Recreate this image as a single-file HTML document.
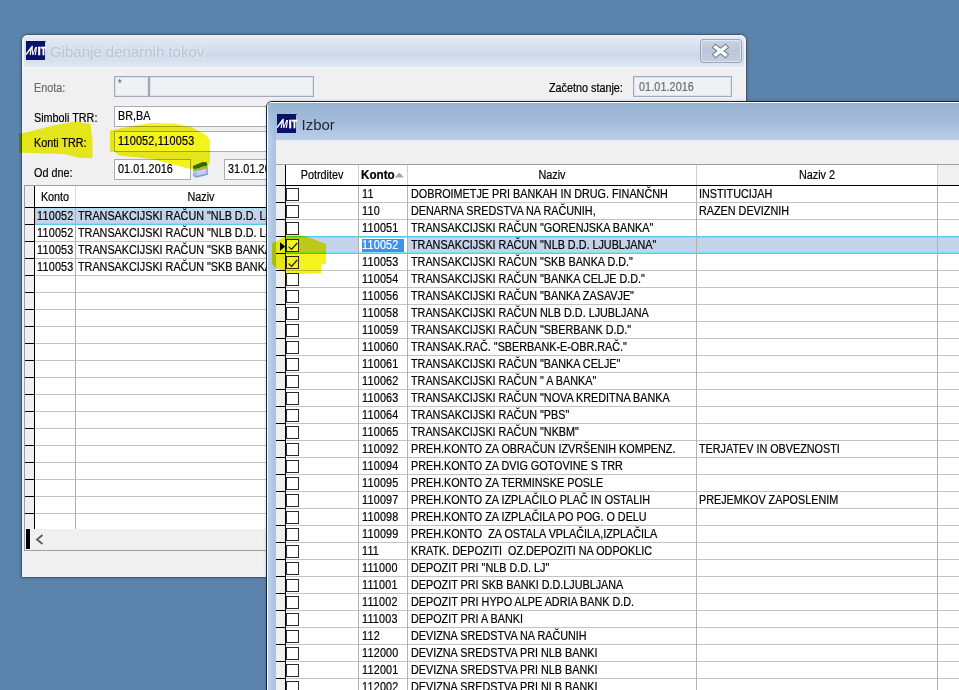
<!DOCTYPE html>
<html lang="sl"><head><meta charset="utf-8"><title>Gibanje denarnih tokov</title>
<style>
html,body{margin:0;padding:0}
body{width:959px;height:690px;overflow:hidden;background:#5b83ab;position:relative;font-family:"Liberation Sans",sans-serif}
#root{position:absolute;left:0;top:0;width:959px;height:690px;overflow:hidden}
.a{position:absolute}
.t{position:absolute;font:12px/14px "Liberation Sans",sans-serif;color:#000;-webkit-text-stroke:.2px currentColor;white-space:pre;transform:scaleX(.9);transform-origin:0 0}
.tc{position:absolute;font:12px/14px "Liberation Sans",sans-serif;color:#000;-webkit-text-stroke:.2px currentColor;white-space:pre;transform:scaleX(.9);transform-origin:50% 0;text-align:center}

.vl{position:absolute;background:#a0a0a0;width:1px}
.cb{position:absolute;width:11px;height:11px;border:1px solid #2a2a2a;background:#fff}
.rh{position:absolute;background:#000;height:1px}
.fld{position:absolute;background:#fff;border:1px solid #abadb3;box-sizing:border-box}
.dis{position:absolute;background:#f0f1f4;border:1px solid #a3a9bb;box-sizing:border-box;box-shadow:inset 0 0 0 1px #dae2f0}
</style></head>
<body><div id="root">
<div class="a" style="left:21px;top:34px;width:726px;height:544px;box-sizing:border-box;border:1px solid #45566b;border-radius:7px 7px 1px 1px;background:#f0f0f0;box-shadow:0 0 3px rgba(20,35,60,.28);overflow:hidden">
<div class="a" style="left:0;top:0;right:0;height:32px;background:linear-gradient(#e9eef6 0,#dae2f0 30%,#ced8ea 62%,#d8e1f0 85%,#e2e9f4 100%);"></div>
<div class="a" style="left:0;top:0;right:0;bottom:0;border:2px solid #eef3fb;border-top-width:1px;border-radius:6px 6px 0 0"></div>
<div class="a" style="left:0;top:32px;right:0;height:1px;background:#f6f8fc"></div>
</div>
<svg class="a" style="left:26px;top:41px" width="21" height="19" viewBox="0 0 21 19"><rect x="0" y="0" width="19" height="19" fill="#0b1169"/><rect x="18.6" y="0" width="1" height="1" fill="#0b1169"/><line x1="0" y1="13.6" x2="6.6" y2="5" stroke="#fff" stroke-width="1.5"/><g font-family="Liberation Sans,sans-serif" font-weight="bold" font-style="italic" font-size="11.7" fill="#fff"><text x="3.4" y="14" textLength="7.4" lengthAdjust="spacingAndGlyphs">M</text></g><g font-family="Liberation Sans,sans-serif" font-weight="bold" font-size="11.7" fill="#fff" stroke="#fff" stroke-width=".45"><text x="11.6" y="14">I</text><text x="14.7" y="14" textLength="5.4" lengthAdjust="spacingAndGlyphs">T</text></g></svg>
<span class="a" style="left:50px;top:42px;font:15px/20px 'Liberation Sans',sans-serif;color:#bbc4d2;text-shadow:0 0 5px rgba(255,255,255,.8);white-space:pre">Gibanje denarnih tokov</span>
<div class="a" style="left:700px;top:39px;width:42px;height:24px;box-sizing:border-box;border:1px solid #98a4ba;border-radius:3px;background:linear-gradient(#ccd4e2,#bcc6d8 50%,#c6cfdf);box-shadow:inset 0 0 0 1px rgba(255,255,255,.45)"></div>
<svg class="a" style="left:710px;top:42px" width="22" height="19" viewBox="0 0 22 19"><path d="M3.48 3.65 L17.52 14.35 M17.52 3.65 L3.48 14.35" stroke="#6d7584" stroke-width="5.4" fill="none"/><path d="M4.2 4.2 L16.8 13.8 M16.8 4.2 L4.2 13.8" stroke="#f9fafc" stroke-width="3.5" fill="none"/></svg>
<span class="t" style="left:34px;top:81px;color:#6d6d6d">Enota:</span>
<span class="t" style="left:34px;top:111px;">Simboli TRR:</span>
<span class="t" style="left:34px;top:136px;">Konti TRR:</span>
<span class="t" style="left:34px;top:166px;">Od dne:</span>
<span class="t" style="left:549px;top:81px;">Začetno stanje:</span>
<div class="dis" style="left:114px;top:76px;width:35px;height:21px"></div>
<div class="dis" style="left:149px;top:76px;width:165px;height:21px"></div>
<span class="t" style="left:118px;top:77px;color:#6d6d6d;font-size:10px">*</span>
<div class="dis" style="left:633px;top:76px;width:99px;height:21px"></div>
<span class="t" style="left:639px;top:80px;letter-spacing:.1px;color:#6d6d6d">01.01.2016</span>
<div class="fld" style="left:114px;top:106px;width:300px;height:21px"></div>
<div class="fld" style="left:114px;top:131px;width:300px;height:21px"></div>
<div class="fld" style="left:114px;top:159px;width:77px;height:21px"></div>
<div class="fld" style="left:224px;top:159px;width:77px;height:21px"></div>
<span class="t" style="left:118px;top:109px;">BR,BA</span>
<span class="t" style="left:118px;top:134px;letter-spacing:.25px;">110052,110053</span>
<span class="t" style="left:118px;top:162px;letter-spacing:.1px;">01.01.2016</span>
<span class="t" style="left:228px;top:162px;letter-spacing:.1px;">31.01.2016</span>
<svg class="a" style="left:192px;top:161px" width="17" height="17" viewBox="0 0 17 17"><defs><linearGradient id="cg" x1="0" y1="0" x2="0" y2="1"><stop offset="0" stop-color="#c4ccf9"/><stop offset="1" stop-color="#93b4e6"/></linearGradient></defs><path d="M1 9.3 L3.5 9.8 L15.6 6.8 L15.6 13.4 L4.2 16.2 L1 14.6 Z" fill="url(#cg)"/><path d="M1.2 14.6 L4.2 16.2 L15.6 13.4" fill="none" stroke="#6d8cc6" stroke-width=".9"/><path d="M14.6 7 L15.6 6.8 L15.6 13.4 L14.6 13.6 Z" fill="#7d97cf"/><path d="M1 7.4 L3.5 7.9 L15.4 4.4 L15.6 6.9 L3.5 10 L1 9.5 Z" fill="#86c225"/><path d="M1 5 L10.5 1 L14.8 1.2 L15.4 4.5 L3.5 8 L1 7.5 Z" fill="#2f6d12"/><path d="M8.6 6.2 L12.6 5.1 L12.6 8 L8.6 9.1 Z" fill="#e9a818"/><path d="M5 11.6 L13.5 9.5 M5 13.6 L13.5 11.5" stroke="#dfe9fb" stroke-width=".8"/></svg>
<div class="a" style="left:24px;top:185px;width:720px;height:1px;background:#a0a0a0;"></div>
<div class="a" style="left:24px;top:185px;width:1px;height:365px;background:#a0a0a0;"></div>
<div class="a" style="left:25px;top:186px;width:720px;height:343px;background:#fff;"></div>
<div class="a" style="left:25px;top:186px;width:9px;height:343px;background:#f0f0f0;"></div>
<div class="a" style="left:34px;top:186px;width:1px;height:343px;background:#000;"></div>
<div class="a" style="left:35px;top:208px;width:720px;height:16px;background:#c4d3ea;"></div>
<div class="a" style="left:35px;top:208px;width:720px;height:1px;background:#a6e2f2;"></div>
<div class="a" style="left:35px;top:208px;width:1px;height:16px;background:#7fdcf0;"></div>
<div class="a" style="left:35px;top:223px;width:720px;height:1px;background:#84dff3;"></div>
<div class="a" style="left:35px;top:224px;width:720px;height:1px;background:#52ceec;"></div>
<div class="a" style="left:35px;top:207px;width:720px;height:1px;background:#000;"></div>
<div class="a" style="left:25px;top:207px;width:9px;height:1px;background:#000;"></div>
<div class="a" style="left:25px;top:224px;width:9px;height:1px;background:#000;"></div>
<div class="a" style="left:35px;top:241px;width:720px;height:1px;background:#c3c3c3;"></div>
<div class="a" style="left:25px;top:241px;width:9px;height:1px;background:#000;"></div>
<div class="a" style="left:35px;top:258px;width:720px;height:1px;background:#c3c3c3;"></div>
<div class="a" style="left:25px;top:258px;width:9px;height:1px;background:#000;"></div>
<div class="a" style="left:35px;top:275px;width:720px;height:1px;background:#c3c3c3;"></div>
<div class="a" style="left:25px;top:275px;width:9px;height:1px;background:#000;"></div>
<div class="a" style="left:35px;top:292px;width:720px;height:1px;background:#c3c3c3;"></div>
<div class="a" style="left:25px;top:292px;width:9px;height:1px;background:#000;"></div>
<div class="a" style="left:35px;top:309px;width:720px;height:1px;background:#c3c3c3;"></div>
<div class="a" style="left:25px;top:309px;width:9px;height:1px;background:#000;"></div>
<div class="a" style="left:35px;top:326px;width:720px;height:1px;background:#c3c3c3;"></div>
<div class="a" style="left:25px;top:326px;width:9px;height:1px;background:#000;"></div>
<div class="a" style="left:35px;top:343px;width:720px;height:1px;background:#c3c3c3;"></div>
<div class="a" style="left:25px;top:343px;width:9px;height:1px;background:#000;"></div>
<div class="a" style="left:35px;top:360px;width:720px;height:1px;background:#c3c3c3;"></div>
<div class="a" style="left:25px;top:360px;width:9px;height:1px;background:#000;"></div>
<div class="a" style="left:35px;top:377px;width:720px;height:1px;background:#c3c3c3;"></div>
<div class="a" style="left:25px;top:377px;width:9px;height:1px;background:#000;"></div>
<div class="a" style="left:35px;top:394px;width:720px;height:1px;background:#c3c3c3;"></div>
<div class="a" style="left:25px;top:394px;width:9px;height:1px;background:#000;"></div>
<div class="a" style="left:35px;top:411px;width:720px;height:1px;background:#c3c3c3;"></div>
<div class="a" style="left:25px;top:411px;width:9px;height:1px;background:#000;"></div>
<div class="a" style="left:35px;top:428px;width:720px;height:1px;background:#c3c3c3;"></div>
<div class="a" style="left:25px;top:428px;width:9px;height:1px;background:#000;"></div>
<div class="a" style="left:35px;top:445px;width:720px;height:1px;background:#c3c3c3;"></div>
<div class="a" style="left:25px;top:445px;width:9px;height:1px;background:#000;"></div>
<div class="a" style="left:35px;top:462px;width:720px;height:1px;background:#c3c3c3;"></div>
<div class="a" style="left:25px;top:462px;width:9px;height:1px;background:#000;"></div>
<div class="a" style="left:35px;top:479px;width:720px;height:1px;background:#c3c3c3;"></div>
<div class="a" style="left:25px;top:479px;width:9px;height:1px;background:#000;"></div>
<div class="a" style="left:35px;top:496px;width:720px;height:1px;background:#c3c3c3;"></div>
<div class="a" style="left:25px;top:496px;width:9px;height:1px;background:#000;"></div>
<div class="a" style="left:35px;top:513px;width:720px;height:1px;background:#c3c3c3;"></div>
<div class="a" style="left:25px;top:513px;width:9px;height:1px;background:#000;"></div>
<div class="a" style="left:35px;top:530px;width:720px;height:1px;background:#c3c3c3;"></div>
<div class="a" style="left:25px;top:530px;width:9px;height:1px;background:#000;"></div>
<div class="a" style="left:75px;top:186px;width:1px;height:21px;background:#dcdcdc;"></div>
<div class="a" style="left:75px;top:208px;width:1px;height:321px;background:#b0b0b0;"></div>
<div class="a" style="left:325px;top:186px;width:1px;height:343px;background:#b0b0b0;"></div>
<span class="tc" style="left:25px;top:190px;width:60px;">Konto</span>
<span class="tc" style="left:170.5px;top:190px;width:60px;">Naziv</span>
<span class="t" style="left:37px;top:209px;letter-spacing:.25px;">110052</span>
<span class="t" style="left:78px;top:209px;">TRANSAKCIJSKI RAČUN "NLB D.D. LJUBLJANA"</span>
<span class="t" style="left:37px;top:226px;letter-spacing:.25px;">110052</span>
<span class="t" style="left:78px;top:226px;">TRANSAKCIJSKI RAČUN "NLB D.D. LJUBLJANA"</span>
<span class="t" style="left:37px;top:243px;letter-spacing:.25px;">110053</span>
<span class="t" style="left:78px;top:243px;">TRANSAKCIJSKI RAČUN "SKB BANKA D.D."</span>
<span class="t" style="left:37px;top:260px;letter-spacing:.25px;">110053</span>
<span class="t" style="left:78px;top:260px;">TRANSAKCIJSKI RAČUN "SKB BANKA D.D."</span>
<div class="a" style="left:25px;top:529px;width:720px;height:21px;background:#f0f0f0;"></div>
<div class="a" style="left:24px;top:550px;width:721px;height:1px;background:#a0a0a0;"></div>
<div class="a" style="left:26px;top:529px;width:4px;height:20px;background:#000;"></div>
<svg class="a" style="left:35px;top:534px" width="9" height="11" viewBox="0 0 9 11"><path d="M7.5 1 L2 5.5 L7.5 10" fill="none" stroke="#5a5a5a" stroke-width="1.8"/></svg>
<div class="a" style="left:266px;top:101px;width:720px;height:620px;box-sizing:border-box;border:1px solid #1a2533;border-radius:6px 6px 0 0;background:#f0f0f0;box-shadow:0 0 3px rgba(10,25,50,.22);overflow:hidden">
<div class="a" style="left:0;top:0;right:0;height:38px;background:linear-gradient(#fff 0,#fff 1px,#97b3d3 1px,#a5bddb 55%,#bccfea 100%)"></div>
<div class="a" style="left:0;top:38px;right:0;height:1px;background:#e6edf9"></div>
<div class="a" style="left:0;top:1px;width:9px;bottom:0;background:linear-gradient(90deg,#fff 0,#fff 1px,#bad2ec 1px,#a6c0df 100%)"></div>
<div class="a" style="left:1px;top:1px;width:8px;height:37px;background:linear-gradient(rgba(151,179,211,.9) 0,rgba(165,189,219,0) 100%)"></div>
</div>
<svg class="a" style="left:277px;top:114px" width="21" height="19" viewBox="0 0 21 19"><rect x="0" y="0" width="19" height="19" fill="#0b1169"/><rect x="18.6" y="0" width="1" height="1" fill="#0b1169"/><line x1="0" y1="13.6" x2="6.6" y2="5" stroke="#fff" stroke-width="1.5"/><g font-family="Liberation Sans,sans-serif" font-weight="bold" font-style="italic" font-size="11.7" fill="#fff"><text x="3.4" y="14" textLength="7.4" lengthAdjust="spacingAndGlyphs">M</text></g><g font-family="Liberation Sans,sans-serif" font-weight="bold" font-size="11.7" fill="#fff" stroke="#fff" stroke-width=".45"><text x="11.6" y="14">I</text><text x="14.7" y="14" textLength="5.4" lengthAdjust="spacingAndGlyphs">T</text></g></svg>
<span class="a" style="left:301.5px;top:115px;font:15px/20px 'Liberation Sans',sans-serif;color:#1c2737;white-space:pre">Izbor</span>
<div class="a" style="left:276px;top:164px;width:700px;height:1px;background:#a0a0a0;"></div>
<div class="a" style="left:276px;top:165px;width:700px;height:540px;background:#fff;"></div>
<div class="a" style="left:276px;top:165px;width:9px;height:540px;background:#f0f0f0;"></div>
<div class="a" style="left:938px;top:165px;width:40px;height:20px;background:#f0f0f0;"></div>
<div class="a" style="left:285px;top:165px;width:1px;height:540px;background:#000;"></div>
<div class="a" style="left:286px;top:237px;width:700px;height:16px;background:#c4d3ea;"></div>
<div class="a" style="left:286px;top:236px;width:700px;height:1px;background:#52ceec;"></div>
<div class="a" style="left:286px;top:237px;width:700px;height:1px;background:#84dff3;"></div>
<div class="a" style="left:286px;top:252px;width:700px;height:1px;background:#84dff3;"></div>
<div class="a" style="left:286px;top:253px;width:700px;height:1px;background:#52ceec;"></div>
<div class="a" style="left:276px;top:185px;width:700px;height:1px;background:#000;"></div>
<div class="a" style="left:286px;top:202px;width:700px;height:1px;background:#c3c3c3;"></div>
<div class="a" style="left:276px;top:202px;width:9px;height:1px;background:#000;"></div>
<div class="a" style="left:286px;top:219px;width:700px;height:1px;background:#c3c3c3;"></div>
<div class="a" style="left:276px;top:219px;width:9px;height:1px;background:#000;"></div>
<div class="a" style="left:276px;top:236px;width:9px;height:1px;background:#000;"></div>
<div class="a" style="left:276px;top:253px;width:9px;height:1px;background:#000;"></div>
<div class="a" style="left:286px;top:270px;width:700px;height:1px;background:#c3c3c3;"></div>
<div class="a" style="left:276px;top:270px;width:9px;height:1px;background:#000;"></div>
<div class="a" style="left:286px;top:287px;width:700px;height:1px;background:#c3c3c3;"></div>
<div class="a" style="left:276px;top:287px;width:9px;height:1px;background:#000;"></div>
<div class="a" style="left:286px;top:304px;width:700px;height:1px;background:#c3c3c3;"></div>
<div class="a" style="left:276px;top:304px;width:9px;height:1px;background:#000;"></div>
<div class="a" style="left:286px;top:321px;width:700px;height:1px;background:#c3c3c3;"></div>
<div class="a" style="left:276px;top:321px;width:9px;height:1px;background:#000;"></div>
<div class="a" style="left:286px;top:338px;width:700px;height:1px;background:#c3c3c3;"></div>
<div class="a" style="left:276px;top:338px;width:9px;height:1px;background:#000;"></div>
<div class="a" style="left:286px;top:355px;width:700px;height:1px;background:#c3c3c3;"></div>
<div class="a" style="left:276px;top:355px;width:9px;height:1px;background:#000;"></div>
<div class="a" style="left:286px;top:372px;width:700px;height:1px;background:#c3c3c3;"></div>
<div class="a" style="left:276px;top:372px;width:9px;height:1px;background:#000;"></div>
<div class="a" style="left:286px;top:389px;width:700px;height:1px;background:#c3c3c3;"></div>
<div class="a" style="left:276px;top:389px;width:9px;height:1px;background:#000;"></div>
<div class="a" style="left:286px;top:406px;width:700px;height:1px;background:#c3c3c3;"></div>
<div class="a" style="left:276px;top:406px;width:9px;height:1px;background:#000;"></div>
<div class="a" style="left:286px;top:423px;width:700px;height:1px;background:#c3c3c3;"></div>
<div class="a" style="left:276px;top:423px;width:9px;height:1px;background:#000;"></div>
<div class="a" style="left:286px;top:440px;width:700px;height:1px;background:#c3c3c3;"></div>
<div class="a" style="left:276px;top:440px;width:9px;height:1px;background:#000;"></div>
<div class="a" style="left:286px;top:457px;width:700px;height:1px;background:#c3c3c3;"></div>
<div class="a" style="left:276px;top:457px;width:9px;height:1px;background:#000;"></div>
<div class="a" style="left:286px;top:474px;width:700px;height:1px;background:#c3c3c3;"></div>
<div class="a" style="left:276px;top:474px;width:9px;height:1px;background:#000;"></div>
<div class="a" style="left:286px;top:491px;width:700px;height:1px;background:#c3c3c3;"></div>
<div class="a" style="left:276px;top:491px;width:9px;height:1px;background:#000;"></div>
<div class="a" style="left:286px;top:508px;width:700px;height:1px;background:#c3c3c3;"></div>
<div class="a" style="left:276px;top:508px;width:9px;height:1px;background:#000;"></div>
<div class="a" style="left:286px;top:525px;width:700px;height:1px;background:#c3c3c3;"></div>
<div class="a" style="left:276px;top:525px;width:9px;height:1px;background:#000;"></div>
<div class="a" style="left:286px;top:542px;width:700px;height:1px;background:#c3c3c3;"></div>
<div class="a" style="left:276px;top:542px;width:9px;height:1px;background:#000;"></div>
<div class="a" style="left:286px;top:559px;width:700px;height:1px;background:#c3c3c3;"></div>
<div class="a" style="left:276px;top:559px;width:9px;height:1px;background:#000;"></div>
<div class="a" style="left:286px;top:576px;width:700px;height:1px;background:#c3c3c3;"></div>
<div class="a" style="left:276px;top:576px;width:9px;height:1px;background:#000;"></div>
<div class="a" style="left:286px;top:593px;width:700px;height:1px;background:#c3c3c3;"></div>
<div class="a" style="left:276px;top:593px;width:9px;height:1px;background:#000;"></div>
<div class="a" style="left:286px;top:610px;width:700px;height:1px;background:#c3c3c3;"></div>
<div class="a" style="left:276px;top:610px;width:9px;height:1px;background:#000;"></div>
<div class="a" style="left:286px;top:627px;width:700px;height:1px;background:#c3c3c3;"></div>
<div class="a" style="left:276px;top:627px;width:9px;height:1px;background:#000;"></div>
<div class="a" style="left:286px;top:644px;width:700px;height:1px;background:#c3c3c3;"></div>
<div class="a" style="left:276px;top:644px;width:9px;height:1px;background:#000;"></div>
<div class="a" style="left:286px;top:661px;width:700px;height:1px;background:#c3c3c3;"></div>
<div class="a" style="left:276px;top:661px;width:9px;height:1px;background:#000;"></div>
<div class="a" style="left:286px;top:678px;width:700px;height:1px;background:#c3c3c3;"></div>
<div class="a" style="left:276px;top:678px;width:9px;height:1px;background:#000;"></div>
<div class="a" style="left:286px;top:695px;width:700px;height:1px;background:#c3c3c3;"></div>
<div class="a" style="left:276px;top:695px;width:9px;height:1px;background:#000;"></div>
<div class="a" style="left:358px;top:165px;width:1px;height:20px;background:#d0d0d0;"></div>
<div class="a" style="left:358px;top:186px;width:1px;height:540px;background:#b2b2b2;"></div>
<div class="a" style="left:407px;top:165px;width:1px;height:20px;background:#d0d0d0;"></div>
<div class="a" style="left:407px;top:186px;width:1px;height:540px;background:#b2b2b2;"></div>
<div class="a" style="left:696px;top:165px;width:1px;height:20px;background:#d0d0d0;"></div>
<div class="a" style="left:696px;top:186px;width:1px;height:540px;background:#b2b2b2;"></div>
<div class="a" style="left:937px;top:165px;width:1px;height:20px;background:#d0d0d0;"></div>
<div class="a" style="left:937px;top:186px;width:1px;height:540px;background:#b2b2b2;"></div>
<span class="tc" style="left:282px;top:168px;width:80px;">Potrditev</span>
<span class="t" style="left:361px;top:168px;font-weight:bold;transform:scaleX(.97)">Konto</span>
<svg class="a" style="left:394px;top:172px" width="11" height="6" viewBox="0 0 11 6"><path d="M0.6 5.4 L5.3 0.4 L10 5.4 Z" fill="#a8a8a8"/></svg>
<span class="tc" style="left:512px;top:168px;width:80px;">Naziv</span>
<span class="tc" style="left:777px;top:168px;width:80px;">Naziv 2</span>
<div class="a" style="left:359px;top:238px;width:48px;height:14px;background:#fff;"></div>
<div class="a" style="left:362px;top:239px;width:42px;height:13px;background:#3d8ff0;"></div>
<div class="cb" style="left:286px;top:188px"></div>
<span class="t" style="left:361.5px;top:187px;letter-spacing:.25px;">11</span>
<span class="t" style="left:410.5px;top:187px;">DOBROIMETJE PRI BANKAH IN DRUG. FINANČNH</span>
<span class="t" style="left:699px;top:187px;">INSTITUCIJAH</span>
<div class="cb" style="left:286px;top:205px"></div>
<span class="t" style="left:361.5px;top:204px;letter-spacing:.25px;">110</span>
<span class="t" style="left:410.5px;top:204px;">DENARNA SREDSTVA NA RAČUNIH,</span>
<span class="t" style="left:699px;top:204px;">RAZEN DEVIZNIH</span>
<div class="cb" style="left:286px;top:222px"></div>
<span class="t" style="left:361.5px;top:221px;letter-spacing:.25px;">110051</span>
<span class="t" style="left:410.5px;top:221px;">TRANSAKCIJSKI RAČUN "GORENJSKA BANKA"</span>
<div class="cb" style="left:286px;top:239px"></div>
<svg class="a" style="left:288px;top:242px" width="10" height="9" viewBox="0 0 10 9"><path d="M0.6 4.6 L3.6 7.4 L9.2 1" fill="none" stroke="#1c1c1c" stroke-width="1.25"/></svg>
<span class="t" style="left:361.5px;top:238px;letter-spacing:.25px;color:#fff">110052</span>
<span class="t" style="left:410.5px;top:238px;">TRANSAKCIJSKI RAČUN "NLB D.D. LJUBLJANA"</span>
<div class="cb" style="left:286px;top:256px"></div>
<svg class="a" style="left:288px;top:259px" width="10" height="9" viewBox="0 0 10 9"><path d="M0.6 4.6 L3.6 7.4 L9.2 1" fill="none" stroke="#1c1c1c" stroke-width="1.25"/></svg>
<span class="t" style="left:361.5px;top:255px;letter-spacing:.25px;">110053</span>
<span class="t" style="left:410.5px;top:255px;">TRANSAKCIJSKI RAČUN "SKB BANKA D.D."</span>
<div class="cb" style="left:286px;top:273px"></div>
<span class="t" style="left:361.5px;top:272px;letter-spacing:.25px;">110054</span>
<span class="t" style="left:410.5px;top:272px;">TRANSAKCIJSKI RAČUN "BANKA CELJE D.D."</span>
<div class="cb" style="left:286px;top:290px"></div>
<span class="t" style="left:361.5px;top:289px;letter-spacing:.25px;">110056</span>
<span class="t" style="left:410.5px;top:289px;">TRANSAKCIJSKI RAČUN "BANKA ZASAVJE"</span>
<div class="cb" style="left:286px;top:307px"></div>
<span class="t" style="left:361.5px;top:306px;letter-spacing:.25px;">110058</span>
<span class="t" style="left:410.5px;top:306px;">TRANSAKCIJSKI RAČUN NLB D.D. LJUBLJANA</span>
<div class="cb" style="left:286px;top:324px"></div>
<span class="t" style="left:361.5px;top:323px;letter-spacing:.25px;">110059</span>
<span class="t" style="left:410.5px;top:323px;">TRANSAKCIJSKI RAČUN "SBERBANK D.D."</span>
<div class="cb" style="left:286px;top:341px"></div>
<span class="t" style="left:361.5px;top:340px;letter-spacing:.25px;">110060</span>
<span class="t" style="left:410.5px;top:340px;">TRANSAK.RAČ. "SBERBANK-E-OBR.RAČ."</span>
<div class="cb" style="left:286px;top:358px"></div>
<span class="t" style="left:361.5px;top:357px;letter-spacing:.25px;">110061</span>
<span class="t" style="left:410.5px;top:357px;">TRANSAKCIJSKI RAČUN "BANKA CELJE"</span>
<div class="cb" style="left:286px;top:375px"></div>
<span class="t" style="left:361.5px;top:374px;letter-spacing:.25px;">110062</span>
<span class="t" style="left:410.5px;top:374px;">TRANSAKCIJSKI RAČUN " A BANKA"</span>
<div class="cb" style="left:286px;top:392px"></div>
<span class="t" style="left:361.5px;top:391px;letter-spacing:.25px;">110063</span>
<span class="t" style="left:410.5px;top:391px;">TRANSAKCIJSKI RAČUN "NOVA KREDITNA BANKA</span>
<div class="cb" style="left:286px;top:409px"></div>
<span class="t" style="left:361.5px;top:408px;letter-spacing:.25px;">110064</span>
<span class="t" style="left:410.5px;top:408px;">TRANSAKCIJSKI RAČUN "PBS"</span>
<div class="cb" style="left:286px;top:426px"></div>
<span class="t" style="left:361.5px;top:425px;letter-spacing:.25px;">110065</span>
<span class="t" style="left:410.5px;top:425px;">TRANSAKCIJSKI RAČUN "NKBM"</span>
<div class="cb" style="left:286px;top:443px"></div>
<span class="t" style="left:361.5px;top:442px;letter-spacing:.25px;">110092</span>
<span class="t" style="left:410.5px;top:442px;">PREH.KONTO ZA OBRAČUN IZVRŠENIH KOMPENZ.</span>
<span class="t" style="left:699px;top:442px;">TERJATEV IN OBVEZNOSTI</span>
<div class="cb" style="left:286px;top:460px"></div>
<span class="t" style="left:361.5px;top:459px;letter-spacing:.25px;">110094</span>
<span class="t" style="left:410.5px;top:459px;">PREH.KONTO ZA DVIG GOTOVINE S TRR</span>
<div class="cb" style="left:286px;top:477px"></div>
<span class="t" style="left:361.5px;top:476px;letter-spacing:.25px;">110095</span>
<span class="t" style="left:410.5px;top:476px;">PREH.KONTO ZA TERMINSKE POSLE</span>
<div class="cb" style="left:286px;top:494px"></div>
<span class="t" style="left:361.5px;top:493px;letter-spacing:.25px;">110097</span>
<span class="t" style="left:410.5px;top:493px;">PREH.KONTO ZA IZPLAČILO PLAČ IN OSTALIH</span>
<span class="t" style="left:699px;top:493px;">PREJEMKOV ZAPOSLENIM</span>
<div class="cb" style="left:286px;top:511px"></div>
<span class="t" style="left:361.5px;top:510px;letter-spacing:.25px;">110098</span>
<span class="t" style="left:410.5px;top:510px;">PREH.KONTO ZA IZPLAČILA PO POG. O DELU</span>
<div class="cb" style="left:286px;top:528px"></div>
<span class="t" style="left:361.5px;top:527px;letter-spacing:.25px;">110099</span>
<span class="t" style="left:410.5px;top:527px;">PREH.KONTO  ZA OSTALA VPLAČILA,IZPLAČILA</span>
<div class="cb" style="left:286px;top:545px"></div>
<span class="t" style="left:361.5px;top:544px;letter-spacing:.25px;">111</span>
<span class="t" style="left:410.5px;top:544px;">KRATK. DEPOZITI  OZ.DEPOZITI NA ODPOKLIC</span>
<div class="cb" style="left:286px;top:562px"></div>
<span class="t" style="left:361.5px;top:561px;letter-spacing:.25px;">111000</span>
<span class="t" style="left:410.5px;top:561px;">DEPOZIT PRI "NLB D.D. LJ"</span>
<div class="cb" style="left:286px;top:579px"></div>
<span class="t" style="left:361.5px;top:578px;letter-spacing:.25px;">111001</span>
<span class="t" style="left:410.5px;top:578px;">DEPOZIT PRI SKB BANKI D.D.LJUBLJANA</span>
<div class="cb" style="left:286px;top:596px"></div>
<span class="t" style="left:361.5px;top:595px;letter-spacing:.25px;">111002</span>
<span class="t" style="left:410.5px;top:595px;">DEPOZIT PRI HYPO ALPE ADRIA BANK D.D.</span>
<div class="cb" style="left:286px;top:613px"></div>
<span class="t" style="left:361.5px;top:612px;letter-spacing:.25px;">111003</span>
<span class="t" style="left:410.5px;top:612px;">DEPOZIT PRI A BANKI</span>
<div class="cb" style="left:286px;top:630px"></div>
<span class="t" style="left:361.5px;top:629px;letter-spacing:.25px;">112</span>
<span class="t" style="left:410.5px;top:629px;">DEVIZNA SREDSTVA NA RAČUNIH</span>
<div class="cb" style="left:286px;top:647px"></div>
<span class="t" style="left:361.5px;top:646px;letter-spacing:.25px;">112000</span>
<span class="t" style="left:410.5px;top:646px;">DEVIZNA SREDSTVA PRI NLB BANKI</span>
<div class="cb" style="left:286px;top:664px"></div>
<span class="t" style="left:361.5px;top:663px;letter-spacing:.25px;">112001</span>
<span class="t" style="left:410.5px;top:663px;">DEVIZNA SREDSTVA PRI NLB BANKI</span>
<div class="cb" style="left:286px;top:681px"></div>
<span class="t" style="left:361.5px;top:680px;letter-spacing:.25px;">112002</span>
<span class="t" style="left:410.5px;top:680px;">DEVIZNA SREDSTVA PRI NLB BANKI</span>
<svg class="a" style="left:280px;top:242px" width="6" height="9" viewBox="0 0 6 9"><path d="M0 0.3 L5.2 4.5 L0 8.7 Z" fill="#000"/></svg>
<svg class="a" style="left:0;top:0;mix-blend-mode:multiply" width="959" height="690" viewBox="0 0 959 690"><g fill="#f4f41c">
<path d="M19 133.5 L19 152.5 L30 153 L64 154 L80 158 L92.5 158 L92.5 140 L90.5 124 L75 121.5 L51 126 L30 131.5 Z"/>
<path d="M110 130.5 L110 152 L115 152 L119 155.5 L152 159 L175 165 L190 169 L200 168 L208.5 165 L210 162 L210 140 L206 135 L192.5 127.5 L175 123.5 L150 123 L132.5 126 Z"/>
<path d="M272 243 L276 241.5 L286 235.5 L299 234.5 L312 238.5 L326 244 L326 263.5 L321 264.5 L321 273.5 L300 274 L286 272.5 L276 268 L272 264 Z"/>
</g></svg>
</div></body></html>
